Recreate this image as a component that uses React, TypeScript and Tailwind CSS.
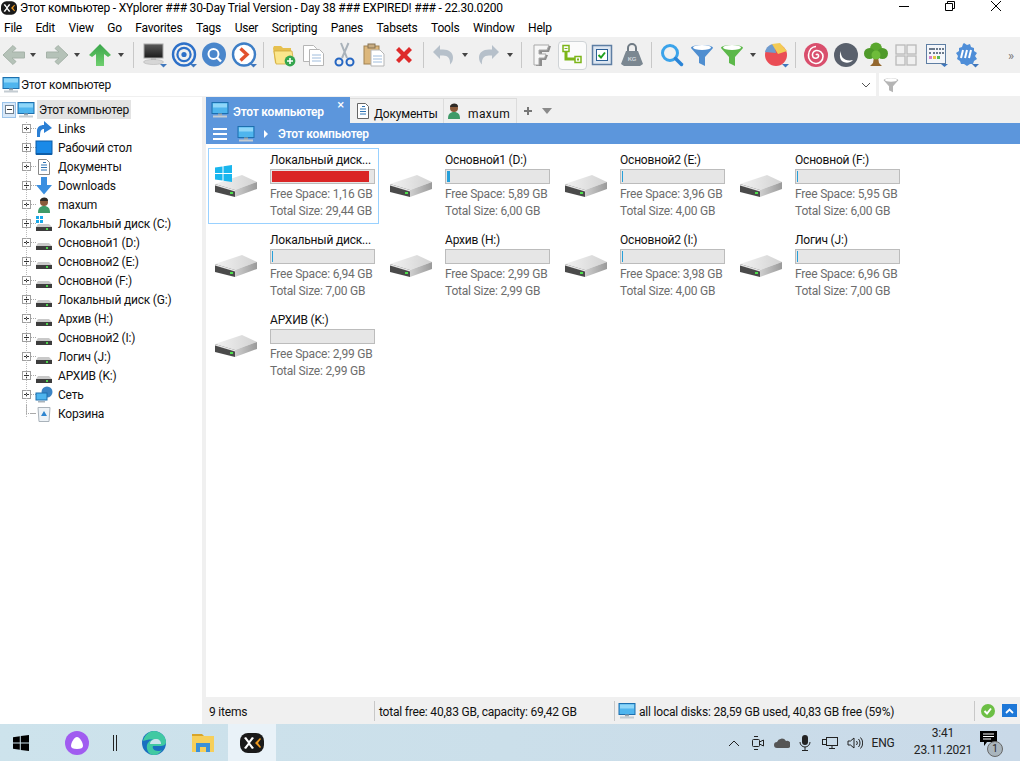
import type { ReactNode } from 'react';

const font = "[font-family:'Roboto','Liberation_Sans',sans-serif] tracking-[-0.2px]";

function Monitor({ size = 18 }: { size?: number }) {
  return (
    <svg width={size} height={size} viewBox="0 0 18 18" className="shrink-0">
      <rect x="1" y="1.5" width="16" height="11" fill="#4fb5ee" stroke="#1d6fae" />
      <rect x="2" y="2.5" width="14" height="4" fill="#8fd6f8" />
      <rect x="7" y="12.5" width="4" height="2" fill="#9aa5ad" />
      <rect x="2" y="14.5" width="14" height="2" fill="#c4ccd2" />
    </svg>
  );
}

function MiniDrive({ win = false }: { win?: boolean }) {
  return (
    <svg width={18} height={18} viewBox="0 0 18 18" className="shrink-0">
      {win && (
        <g fill="#19a8e8">
          <rect x="1" y="1" width="3" height="3" />
          <rect x="5" y="1" width="3" height="3" />
          <rect x="1" y="5" width="3" height="3" />
          <rect x="5" y="5" width="3" height="3" />
        </g>
      )}
      <path d="M3 9h11l3 3H1z" fill="#c9c9c9" />
      <rect x="1" y="12" width="16" height="4" fill="#3d3d3d" />
      <rect x="11" y="13" width="2" height="2" fill="#4ed04e" />
    </svg>
  );
}

function BigDrive({ win = false }: { win?: boolean }) {
  return (
    <svg width={46} height={44} viewBox="0 0 46 44" className="shrink-0">
      <defs>
        <linearGradient id="driveTop" x1="0" y1="0" x2="1" y2="0">
          <stop offset="0" stopColor="#f2f2f2" />
          <stop offset="1" stopColor="#d2d2d2" />
        </linearGradient>
        <linearGradient id="driveSide" x1="0" y1="0" x2="1" y2="0">
          <stop offset="0" stopColor="#cfcfcf" />
          <stop offset="1" stopColor="#9a9a9a" />
        </linearGradient>
      </defs>
      <path d="M2 30l27-9 15 7-22 8z" fill="url(#driveTop)" />
      <path d="M2 30l20 6v7L2 38z" fill="#4a4a4a" />
      <path d="M2 30l20 6v1.500L2 31.500z" fill="#e8e8e8" />
      <path d="M22 36l22-8v7l-22 8z" fill="url(#driveSide)" />
      <rect x="17" y="38" width="3" height="2" fill="#4ee04e" />
      {win && (
        <g fill="#19b6ee">
          <path d="M2 13.500l7.500-1V19H2z" />
          <path d="M10.500 12.300L19 11v8h-8.500z" />
          <path d="M2 20h7.500v6.500l-7.500-1z" />
          <path d="M10.500 20H19v8l-8.500-1.300z" />
        </g>
      )}
    </svg>
  );
}

function Tri({ className = '' }: { className?: string }) {
  return (
    <span className={`w-[10px] h-full flex items-center justify-center shrink-0 ${className}`}>
      <span className="w-0 h-0 border-x-[3.5px] border-x-transparent border-t-[4px] border-t-[#444]" />
    </span>
  );
}

function Sep({ className = '' }: { className?: string }) {
  return <span className={`w-px h-[26px] bg-[#c8c8c8] shrink-0 ${className}`} />;
}

function Slot({ children, className = '' }: { children: ReactNode; className?: string }) {
  return <span className={`w-[30px] h-[30px] flex items-center justify-center shrink-0 ${className}`}>{children}</span>;
}

function Slot28({ children, className = '' }: { children: ReactNode; className?: string }) {
  return <span className={`w-[28px] h-[30px] flex items-center justify-center shrink-0 ${className}`}>{children}</span>;
}

function Caret() {
  return <path d="M20 23h7l-3.500 3.500z" fill="#3f77bd" />;
}

function Toolbar() {
  return (
    <div className="h-[36px] bg-[#f0f0f0] flex items-center">
      <Slot28>
        <svg width="24" height="22" viewBox="0 0 24 22">
          <path d="M1 11L11 1.500 14 4.500 10 8h12.500v6H10l4 3.500-3 3z" fill="#b5c2b8" stroke="#a5b2a8" />
        </svg>
      </Slot28>
      <Tri />
      <Slot28 className="ml-[5px]">
        <svg width="24" height="22" viewBox="0 0 24 22">
          <path d="M23 11L13 1.500 10 4.500 14 8H1.500v6H14l-4 3.500 3 3z" fill="#b5c2b8" stroke="#a5b2a8" />
        </svg>
      </Slot28>
      <Tri className="ml-px" />
      <Slot28 className="ml-[4px]">
        <svg width="24" height="22" viewBox="0 0 24 22">
          <defs>
            <linearGradient id="upArrow" x1="0" y1="0" x2="0" y2="1">
              <stop offset="0" stopColor="#3aa54a" />
              <stop offset="1" stopColor="#6fcf6f" />
            </linearGradient>
          </defs>
          <path d="M12 0l11 11-3 2-4-3v12H8V10l-4 3-3-2z" fill="url(#upArrow)" />
        </svg>
      </Slot28>
      <Tri className="ml-[2px]" />
      <Sep className="ml-[7px]" />
      <Slot className="ml-[5px]">
        <svg width="28" height="28" viewBox="0 0 28 28">
          <defs>
            <linearGradient id="darkScreen" x1="0" y1="0" x2="0" y2="1">
              <stop offset="0" stopColor="#5a5a5a" />
              <stop offset="1" stopColor="#1c1c1c" />
            </linearGradient>
          </defs>
          <rect x="4" y="3" width="19" height="14" fill="url(#darkScreen)" stroke="#a8a8a8" />
          <path d="M11 17h5v2h-5z" fill="#bdbdbd" />
          <ellipse cx="13.500" cy="21" rx="10" ry="2.500" fill="#d6d6d6" stroke="#aaa" strokeWidth=".5" />
          <Caret />
        </svg>
      </Slot>
      <Slot>
        <svg width="28" height="28" viewBox="0 0 28 28">
          <circle cx="14" cy="13.500" r="11" fill="none" stroke="#2d70c8" strokeWidth="2.400" />
          <circle cx="14" cy="13.500" r="6.600" fill="none" stroke="#2d70c8" strokeWidth="2.200" />
          <circle cx="14" cy="13.500" r="2.600" fill="#2d70c8" />
          <Caret />
        </svg>
      </Slot>
      <Slot>
        <svg width="28" height="28" viewBox="0 0 28 28">
          <circle cx="14" cy="13.500" r="12" fill="#4a86cb" />
          <circle cx="13.500" cy="13" r="5" fill="none" stroke="#fff" strokeWidth="2" />
          <path d="M17 16.500l4 4" stroke="#fff" strokeWidth="2.400" />
        </svg>
      </Slot>
      <Slot>
        <svg width="28" height="28" viewBox="0 0 28 28">
          <circle cx="14" cy="13.500" r="11" fill="#fff" stroke="#3e7ec6" strokeWidth="2.400" />
          <path d="M10.500 7.500l6.500 6-6.500 6" fill="none" stroke="#e2512d" strokeWidth="3.400" />
          <Caret />
        </svg>
      </Slot>
      <Sep className="ml-[4px]" />
      <Slot className="ml-[5px]">
        <svg width="24" height="24" viewBox="0 0 24 24">
          <path d="M1 5l1-2h7l2 2h8v15H3z" fill="#e6c04f" />
          <path d="M2 8h18l2 13H4z" fill="#fbe68c" stroke="#d0a93c" strokeWidth=".8" />
          <circle cx="18" cy="18" r="5.400" fill="#35a64f" />
          <path d="M18 15v6M15 18h6" stroke="#fff" strokeWidth="1.600" />
        </svg>
      </Slot>
      <Slot>
        <svg width="24" height="24" viewBox="0 0 24 24" fill="#fff" stroke="#b5b5b5">
          <path d="M1.500 2.500h10l3 3v13h-13z" />
          <path d="M7.500 6.500h10l4 4v12h-14z" />
          <path d="M10 12h9M10 15h9M10 18h9" stroke="#9fbcdc" />
        </svg>
      </Slot>
      <Slot>
        <svg width="22" height="26" viewBox="0 0 22 26" fill="none">
          <path d="M15.500 1L9 16M8 1l6 15" stroke="#a9b2ba" strokeWidth="2" />
          <circle cx="6" cy="20" r="3.500" stroke="#2566c2" strokeWidth="2" />
          <circle cx="17" cy="20" r="3.500" stroke="#2566c2" strokeWidth="2" />
        </svg>
      </Slot>
      <Slot>
        <svg width="24" height="24" viewBox="0 0 24 24">
          <rect x="2" y="3" width="15" height="18" fill="#dcb77c" stroke="#a08150" />
          <rect x="6" y="1" width="7" height="4" fill="#c8ad83" stroke="#857253" />
          <path d="M9 7h9l4 4v12H9z" fill="#fff" stroke="#b5b5b5" />
          <path d="M11 13h9M11 16h9M11 19h9" stroke="#9fbcdc" />
        </svg>
      </Slot>
      <Slot>
        <svg width="20" height="20" viewBox="0 0 20 20">
          <path d="M2 5l3-3 5 5 5-5 3 3-5 5 5 5-3 3-5-5-5 5-3-3 5-5z" fill="#de2b2b" />
        </svg>
      </Slot>
      <Sep className="ml-[4px]" />
      <Slot28 className="ml-[5px]">
        <svg width="24" height="24" viewBox="0 0 24 24" fill="none">
          <path d="M2 9l7-7v4.500h3c6 0 10 3 10 8 0 3-1 5-3 7 .5-6-2-9-7-9H9V16z" fill="#b6c0ca" />
        </svg>
      </Slot28>
      <Tri className="ml-[3px]" />
      <Slot28 className="ml-[5px]">
        <svg width="24" height="24" viewBox="0 0 24 24" fill="none">
          <path d="M22 9l-7-7v4.500h-3c-6 0-10 3-10 8 0 3 1 5 3 7-.5-6 2-9 7-9h3V16z" fill="#b6c0ca" />
        </svg>
      </Slot28>
      <Tri className="ml-[2px]" />
      <Sep className="ml-[6px]" />
      <Slot className="ml-[5px]">
        <svg width="22" height="24" viewBox="0 0 22 24">
          <path d="M5 3h15l-2 6H11v3h6l-2 5h-4v6H5z" fill="#8d8d8d" />
          <path d="M3 2h15l-2 5H8v4h7l-1.500 4H8v7H3z" fill="#f7f7f7" stroke="#a9a9a9" />
        </svg>
      </Slot>
      <Slot>
        <span className="w-[29px] h-[29px] rounded-[4px] border border-[#cfd3d6] bg-[#fbfbfb] flex items-center justify-center">
          <svg width="22" height="22" viewBox="0 0 22 22" fill="none">
            <rect x="2" y="1.500" width="6" height="6" stroke="#7cb518" strokeWidth="1.500" />
            <path d="M3.500 4.500h3" stroke="#7cb518" />
            <path d="M5 8v7h9" stroke="#7cb518" strokeWidth="3" />
            <rect x="14" y="12.500" width="6" height="6" stroke="#7cb518" strokeWidth="1.500" />
            <rect x="16" y="14.500" width="2" height="2" fill="#7cb518" />
          </svg>
        </span>
      </Slot>
      <Slot>
        <svg width="22" height="22" viewBox="0 0 22 22" fill="none">
          <rect x="1.500" y="1.500" width="19" height="19" fill="#dde6f1" stroke="#5e7ea3" strokeWidth="1.500" />
          <rect x="5.500" y="5.500" width="11" height="11" fill="#fff" stroke="#2c5f95" />
          <path d="M7.500 11l2.500 2.500 4-5" stroke="#1ea01e" strokeWidth="2" />
        </svg>
      </Slot>
      <Slot>
        <svg width="24" height="24" viewBox="0 0 24 24">
          <path d="M8 8V5a4 4 0 018 0v3" fill="none" stroke="#6f7a84" strokeWidth="2" />
          <path d="M6 8h12l5 13-3 2H4l-3-2z" fill="#7b8791" />
          <text x="12" y="18" fontSize="6" textAnchor="middle" fill="#cfd6db" fontFamily="Liberation Sans" fontWeight="700">
            KG
          </text>
        </svg>
      </Slot>
      <Sep className="ml-[4px]" />
      <Slot className="ml-[5px]">
        <svg width="24" height="24" viewBox="0 0 24 24" fill="none">
          <circle cx="10" cy="10" r="7.500" stroke="#3ba3ea" strokeWidth="3" />
          <path d="M15.500 15.500l6 6" stroke="#2b84d6" strokeWidth="3.500" strokeLinecap="round" />
        </svg>
      </Slot>
      <Slot>
        <svg width="24" height="24" viewBox="0 0 24 24">
          <path d="M1 5c0-4 22-4 22 0l-8 9v9l-6-3v-6z" fill="#4f8ed0" />
          <ellipse cx="12" cy="4.500" rx="9" ry="2.500" fill="#fff" />
        </svg>
      </Slot>
      <Slot>
        <svg width="24" height="24" viewBox="0 0 24 24">
          <path d="M1 5c0-4 22-4 22 0l-8 9v9l-6-3v-6z" fill="#5cb84a" />
          <ellipse cx="12" cy="4.500" rx="9" ry="2.500" fill="#fff" />
        </svg>
      </Slot>
      <Tri className="ml-px" />
      <Slot className="ml-[3px]">
        <svg width="28" height="28" viewBox="0 0 28 28">
          <circle cx="14" cy="14" r="11" fill="#ea4d55" />
          <path d="M14 12L3 11c1-5 5-8 9-8z" fill="#6f9bce" />
          <path d="M10 3l8-1 7 8-9 3z" fill="#f3cb55" />
          <Caret />
        </svg>
      </Slot>
      <Sep className="ml-[4px]" />
      <Slot className="ml-[5px]">
        <svg width="26" height="26" viewBox="0 0 26 26" fill="none">
          <circle cx="13" cy="13" r="12" fill="#d94f6d" />
          <path
            d="M13 13c1-1.500 3-.5 2.500 1.500-.5 2-4 2.500-5.500.5-1.500-2.500 0-6 3-6.500 3.500-.5 7 2 7 6s-3.500 7.500-7.500 7-7.500-4-7-8.500C6 8 9 4.500 13 4.500"
            stroke="#fff"
            strokeWidth="1.600"
          />
        </svg>
      </Slot>
      <Slot>
        <svg width="26" height="26" viewBox="0 0 26 26">
          <circle cx="13" cy="13" r="12" fill="#59606c" />
          <path d="M8 9c-1 6 4 11 12 9-3 3.500-9 3.500-12 0-1.500-2.500-1.500-6 0-9z" fill="#fff" />
        </svg>
      </Slot>
      <Slot>
        <svg width="26" height="26" viewBox="0 0 26 26">
          <path d="M11 15h4l1 6 3 3H7l3-3z" fill="#94682f" />
          <circle cx="13" cy="6.500" r="6" fill="#5aa72e" />
          <circle cx="6.500" cy="11.500" r="5.500" fill="#4f9a2a" />
          <circle cx="19.500" cy="11.500" r="5.500" fill="#4f9a2a" />
          <circle cx="13" cy="13" r="4.500" fill="#6ebc3a" />
        </svg>
      </Slot>
      <Slot>
        <svg width="24" height="24" viewBox="0 0 24 24" fill="none" stroke="#b9b9b9" strokeWidth="1.300">
          <rect x="2" y="2" width="9" height="9" />
          <rect x="13" y="2" width="9" height="9" />
          <rect x="2" y="13" width="9" height="9" />
          <rect x="13" y="13" width="9" height="9" />
        </svg>
      </Slot>
      <Slot>
        <svg width="28" height="26" viewBox="0 0 28 26">
          <rect x="4.500" y="2.500" width="19" height="19" fill="#f4f6fa" stroke="#5e7ea3" />
          <path d="M7 6h6v2H7zM14 6h2v2h-2zM17 6h2v2h-2zM20 6h2v2h-2zM7 10h2v2H7zM11 10h2v2h-2zM14 10h2v2h-2zM17 10h2v2h-2zM20 10h2v2h-2z" fill="#6b7a8c" />
          <rect x="7" y="14" width="3" height="3" fill="#d77ec8" />
          <rect x="11" y="14" width="3" height="3" fill="#e8c442" />
          <rect x="15" y="14" width="3" height="3" fill="#58b858" />
          <path d="M19 22h7l-3.500 3z" fill="#3f77bd" />
        </svg>
      </Slot>
      <Slot>
        <svg width="28" height="28" viewBox="0 0 28 28">
          <path d="M12 2l3 2 3-1 1 3 3 1v3l3 2-2 3 2 3-3 2-1 3-3 0-3 2-3-2-3 0-1-3-3-2 1-3-2-3 3-2 0-3 3-1 1-3z" fill="#4f8ed8" />
          <path d="M9 17l2-8M13 17l2-8M17 17l2-8" stroke="#fff" strokeWidth="2" />
          <Caret />
        </svg>
      </Slot>
      <span className="ml-auto mr-[2px] w-[10px] text-[#777] text-[13px] leading-none">»</span>
    </div>
  );
}

const treeItems: { label: string; icon: ReactNode }[] = [
  {
    label: 'Links',
    icon: (
      <svg width="18" height="18" viewBox="0 0 18 18">
        <path d="M2 17V11c0-4 3-6 7-6V1l8 7-8 5V9c-3 0-4 2-4 8z" fill="#2a7fd5" />
      </svg>
    ),
  },
  {
    label: 'Рабочий стол',
    icon: (
      <svg width="18" height="18" viewBox="0 0 18 18">
        <rect x="1" y="2" width="16" height="13" fill="#1a8ae8" stroke="#0d5da8" />
        <rect x="1" y="14" width="16" height="2" fill="#0d5da8" />
      </svg>
    ),
  },
  {
    label: 'Документы',
    icon: (
      <svg width="18" height="18" viewBox="0 0 18 18">
        <path d="M3.500 1.500h8l3 3v12h-11z" fill="#fff" stroke="#888" />
        <path d="M6 7h6M6 9.500h6M6 12h6M8 4.500h3" stroke="#2f74b5" />
      </svg>
    ),
  },
  {
    label: 'Downloads',
    icon: (
      <svg width="18" height="18" viewBox="0 0 18 18">
        <path d="M6 0h6v8h5l-8 9.500L1 8h5z" fill="#3b8fe0" />
      </svg>
    ),
  },
  {
    label: 'maxum',
    icon: (
      <svg width="18" height="18" viewBox="0 0 18 18">
        <path d="M3 17c0-5 2-7 6-7s6 2 6 7z" fill="#3f9a68" />
        <circle cx="9" cy="6" r="4" fill="#8a5a3a" />
        <path d="M5 5c0-4 8-5 8 0z" fill="#2e2a26" />
      </svg>
    ),
  },
  { label: 'Локальный диск (C:)', icon: <MiniDrive win /> },
  { label: 'Основной1 (D:)', icon: <MiniDrive /> },
  { label: 'Основной2 (E:)', icon: <MiniDrive /> },
  { label: 'Основной (F:)', icon: <MiniDrive /> },
  { label: 'Локальный диск (G:)', icon: <MiniDrive /> },
  { label: 'Архив (H:)', icon: <MiniDrive /> },
  { label: 'Основной2 (I:)', icon: <MiniDrive /> },
  { label: 'Логич (J:)', icon: <MiniDrive /> },
  { label: 'АРХИВ (K:)', icon: <MiniDrive /> },
  {
    label: 'Сеть',
    icon: (
      <svg width="18" height="18" viewBox="0 0 18 18">
        <circle cx="12" cy="6" r="5.500" fill="#3b84c4" />
        <rect x="1" y="7" width="11" height="7" fill="#4fb5ee" stroke="#1d6fae" />
        <rect x="3" y="15" width="7" height="1.500" fill="#aab4bb" />
      </svg>
    ),
  },
  {
    label: 'Корзина',
    icon: (
      <svg width="18" height="18" viewBox="0 0 18 18">
        <path d="M3 2.500h12l-1 14H4z" fill="#eef3f7" stroke="#a9b2ba" />
        <path d="M9 6l3 5H6z" fill="#2f86d0" />
      </svg>
    ),
  },
];

function Plus({ minus = false, big = false }: { minus?: boolean; big?: boolean }) {
  return (
    <span
      className={`w-[9px] h-[9px] border bg-white flex items-center justify-center shrink-0 relative ${big ? 'border-[#6f7f8f]' : 'border-[#a0a0a0]'}`}
    >
      <span className="absolute w-[5px] h-px bg-[#333]" />
      {!minus && <span className="absolute w-px h-[5px] bg-[#333]" />}
    </span>
  );
}

function Tree() {
  return (
    <div className="w-[202px] shrink-0 bg-white pt-[3px] text-[12px] text-[#111] relative">
      <div className="h-[19px] flex items-center">
        <span className="ml-[2px] w-[14px] h-[16px] bg-[#d8e8f8] border border-[#9cc4ea] flex items-center justify-center">
          <Plus minus big />
        </span>
        <span className="ml-px">
          <Monitor />
        </span>
        <span className="ml-[2px] px-[2px] h-[19px] leading-[20px] bg-[#e3e3e3]">Этот компьютер</span>
      </div>
      {treeItems.map((item, i) => (
        <div key={item.label} className="h-[19px] flex items-center pl-[22px]">
          {i < treeItems.length - 1 ? (
            <Plus />
          ) : (
            <span className="w-[9px] h-[9px] shrink-0 ml-[4px] -mt-[9px] border-l border-b border-dotted border-[#aaa]" />
          )}
          <span
            className={`h-px border-t border-dotted border-[#aaa] w-[5px] shrink-0 ${i < treeItems.length - 1 ? '' : '-ml-[4px]'}`}
          />
          <span className="w-[18px] h-[18px] shrink-0 -ml-px">{item.icon}</span>
          <span className="ml-[5px] whitespace-nowrap">{item.label}</span>
        </div>
      ))}
      <span className="absolute left-[26px] top-[25px] h-[295px] border-l border-dotted border-[#bbb] pointer-events-none" />
    </div>
  );
}

type Drive = { name: string; free: string; total: string; used: number; win?: boolean; selected?: boolean };

const drives: Drive[] = [
  { name: 'Локальный диск...', free: '1,16', total: '29,44', used: 96, win: true, selected: true },
  { name: 'Основной1 (D:)', free: '5,89', total: '6,00', used: 3 },
  { name: 'Основной2 (E:)', free: '3,96', total: '4,00', used: 1 },
  { name: 'Основной (F:)', free: '5,95', total: '6,00', used: 1 },
  { name: 'Локальный диск...', free: '6,94', total: '7,00', used: 1 },
  { name: 'Архив (H:)', free: '2,99', total: '2,99', used: 0 },
  { name: 'Основной2 (I:)', free: '3,98', total: '4,00', used: 1 },
  { name: 'Логич (J:)', free: '6,96', total: '7,00', used: 1 },
  { name: 'АРХИВ (K:)', free: '2,99', total: '2,99', used: 0 },
];

function Tile({ d }: { d: Drive }) {
  return (
    <div
      className={`w-[171px] h-[76px] mr-[4px] mb-[4px] flex border ${d.selected ? 'border-[#99d1ff]' : 'border-transparent'}`}
    >
      <div className="w-[61px] shrink-0 pl-[4px] pt-[5px]">
        <BigDrive win={d.win} />
      </div>
      <div className="text-[12px] leading-[17px] text-[#6d6d6d] pt-[3px]">
        <div className="text-[#111] whitespace-nowrap leading-[16px]">{d.name}</div>
        <div className="w-[105px] h-[15px] border border-[#bcbcbc] bg-[#e6e6e6] p-px mt-[1px] mb-[2px]">
          <div className={`h-full ${d.selected ? 'bg-[#da2626]' : 'bg-[#26a0da]'}`} style={{ width: `${d.used}%` }} />
        </div>
        <div className="whitespace-nowrap">Free Space: {d.free} GB</div>
        <div className="whitespace-nowrap">Total Size: {d.total} GB</div>
      </div>
    </div>
  );
}

function Tabs() {
  return (
    <div className="h-[26px] bg-[#f0f0f0] flex items-end text-[12px] text-[#111]">
      <div className="w-[144px] h-[26px] bg-[#5c96dc] text-white font-semibold flex items-center pl-[5px] relative">
        <Monitor />
        <span className="ml-[4px] mt-[4px]">Этот компьютер</span>
        <span className="absolute right-[6px] top-[1px] text-[13px] leading-[14px] font-normal">×</span>
      </div>
      <div className="w-[94px] h-[25px] border-t border-r border-[#dcdcdc] flex items-center pl-[4px]">
        <svg width="18" height="18" viewBox="0 0 18 18">
          <path d="M3.500 1.500h8l3 3v12h-11z" fill="#fff" stroke="#666" />
          <path d="M6 7h6M6 9.500h6M6 12h6M8 4.500h3" stroke="#2f74b5" />
        </svg>
        <span className="ml-[2px] mt-[5px]">Документы</span>
      </div>
      <div className="w-[73px] h-[25px] border-t border-r border-[#dcdcdc] flex items-center pl-[1px]">
        <svg width="18" height="18" viewBox="0 0 18 18">
          <path d="M3 17c0-5 2-7 6-7s6 2 6 7z" fill="#3f9a68" />
          <circle cx="9" cy="6" r="4" fill="#8a5a3a" />
          <path d="M5 5c0-4 8-5 8 0z" fill="#2e2a26" />
        </svg>
        <span className="ml-[5px] mt-[5px] tracking-[0.4px]">maxum</span>
      </div>
      <svg width="12" height="12" viewBox="0 0 12 12" className="ml-[5px] mb-[6px]">
        <path d="M6 2v8M2 6h8" stroke="#777" strokeWidth="2" />
      </svg>
      <span className="ml-[8px] mb-[9px] w-0 h-0 border-x-[5px] border-x-transparent border-t-[6px] border-t-[#8a8a8a]" />
    </div>
  );
}

function Breadcrumb() {
  return (
    <div className="h-[21px] bg-[#5c96dc] flex items-center text-[12px] font-semibold text-white">
      <span className="ml-[7px] w-[14px] flex flex-col gap-[3px]">
        <span className="h-[2px] bg-white" />
        <span className="h-[2px] bg-white" />
        <span className="h-[2px] bg-white" />
      </span>
      <span className="ml-[10px]">
        <Monitor />
      </span>
      <span className="ml-[9px] w-0 h-0 border-y-[4px] border-y-transparent border-l-[4px] border-l-white" />
      <span className="ml-[10px]">Этот компьютер</span>
    </div>
  );
}

function StatusBar() {
  return (
    <div className="h-[27px] bg-[#f0f0f0] flex items-center text-[12px] text-[#111]">
      <span className="w-[168px] pl-[3px] pt-[2px] shrink-0">9 items</span>
      <span className="w-px h-[20px] bg-[#c8c8c8] shrink-0" />
      <span className="w-[239px] pl-[4px] pt-[2px] shrink-0">total free: 40,83 GB, capacity: 69,42 GB</span>
      <span className="w-px h-[20px] bg-[#c8c8c8] shrink-0" />
      <span className="ml-[3px]">
        <Monitor />
      </span>
      <span className="ml-[3px] pt-[2px] whitespace-nowrap">all local disks: 28,59 GB used, 40,83 GB free (59%)</span>
      <span className="ml-auto w-px h-[20px] bg-[#c8c8c8] shrink-0" />
      <svg width="16" height="16" viewBox="0 0 16 16" className="ml-[5px]">
        <circle cx="8" cy="8" r="7" fill="#6cbf45" />
        <path d="M4.500 8l2.500 2.500 4-5" fill="none" stroke="#fff" strokeWidth="2" />
      </svg>
      <span className="ml-[6px] mr-[3px] w-[15px] h-[13px] bg-[#1e78d8] flex items-center justify-center">
        <svg width="9" height="6" viewBox="0 0 9 6">
          <path d="M1 5l3.500-3.500L8 5" fill="none" stroke="#fff" strokeWidth="1.800" />
        </svg>
      </span>
    </div>
  );
}

function XyLogo({ w, h }: { w: number; h: number }) {
  return (
    <svg width={w} height={h} viewBox="0 0 24 20">
      <rect width="24" height="20" rx="8" fill="#1a1a1a" />
      <path d="M4 5l2-1 3 4 3-4 2 1-4 5 4 5-2 1-3-4-3 4-2-1 4-5z" fill="#fff" />
      <path d="M15 10l5-5 1 1-3 4 3 4-1 1z" fill="#f19a1f" />
    </svg>
  );
}

function Taskbar() {
  return (
    <div className="h-[37px] bg-gradient-to-r from-[#cde3ec] via-[#cbdfea] to-[#c9d9e8] flex items-center text-[12px] text-[#222]">
      <svg width="16" height="16" viewBox="0 0 16 16" className="ml-[13px]" fill="#000">
        <path d="M0 2.200L6.800 1.200V7.500H0zM7.800 1L16 0v7.500H7.800zM0 8.500h6.800v6.300L0 13.800zM7.800 8.500H16V16l-8.200-1.100z" />
      </svg>
      <svg width="24" height="24" viewBox="0 0 24 24" className="ml-[36px]">
        <circle cx="12" cy="12" r="12" fill="#a05cf0" />
        <path d="M12 6c3 0 6 6 6 9 0 2-2 3-6 3s-6-1-6-3c0-3 3-9 6-9z" fill="#fff" />
      </svg>
      <span className="ml-[24px] w-[4px] h-[16px] border-x border-[#222]" />
      <svg width="24" height="24" viewBox="0 0 24 24" className="ml-[25px]">
        <circle cx="12" cy="12" r="12" fill="#1a6fc0" />
        <path d="M1 10C3 3 8 0 12 0c6 0 12 5 12 11 0 3-3 4-6 4H11c-1 2 1 5 5 5 2 0 3-.5 4-1-2 3-5 5-8 5-5 0-8-5-7-10 1-3 4-6 8-5-4-1-9 0-12 1z" fill="#41c9a2" />
        <path d="M8 13c0-3 3-5 6-5 3 0 5 2 5 5H8z" fill="#cde3ec" />
      </svg>
      <svg width="22" height="20" viewBox="0 0 22 20" className="ml-[26px]">
        <path d="M0 1h10l2 2H0z" fill="#d8a52a" />
        <rect y="3" width="22" height="16" fill="#f6cf5a" />
        <rect x="4" y="10" width="14" height="9" fill="#3a90d8" />
        <rect x="8" y="14" width="6" height="5" fill="#f6cf5a" />
      </svg>
      <div className="ml-[14px] w-[48px] h-full bg-[#e9f2f8] flex items-center justify-center">
        <XyLogo w={24} h={20} />
      </div>
      <div className="ml-auto flex items-center">
        <svg width="12" height="8" viewBox="0 0 12 8" fill="none" stroke="#222">
          <path d="M1 7l5-5 5 5" />
        </svg>
        <svg width="14" height="16" viewBox="0 0 14 16" fill="none" stroke="#222" className="ml-[11px]">
          <rect x="1.500" y="4.500" width="7" height="7" rx="1" />
          <path d="M8.500 7l4-2v6l-4-2M3 1.500h4M3 14.500h4" />
        </svg>
        <svg width="16" height="12" viewBox="0 0 16 12" className="ml-[9px]">
          <path d="M3 11a3 3 0 010-6 5 5 0 019-1 3.500 3.500 0 012 7z" fill="#555" />
        </svg>
        <svg width="12" height="18" viewBox="0 0 12 18" className="ml-[9px]">
          <rect x="3" y="1" width="6" height="10" rx="3" fill="#222" />
          <path d="M1 8a5 5 0 0010 0M6 13v3M3 16.500h6" fill="none" stroke="#222" />
        </svg>
        <svg width="16" height="14" viewBox="0 0 16 14" fill="none" stroke="#222" className="ml-[11px]">
          <rect x="4.500" y="1.500" width="11" height="8" />
          <rect x=".5" y="3.500" width="4" height="5" fill="#cbdfea" />
          <path d="M10 9.500v3M7 12.500h6" />
        </svg>
        <svg width="16" height="14" viewBox="0 0 16 14" fill="none" stroke="#222" className="ml-[9px]">
          <path d="M1 5h2.500L7 2v10L3.500 9H1zM9.500 5a3 3 0 010 4M11.500 3a6 6 0 010 8M13.500 1.500a8 8 0 010 11" />
        </svg>
        <span className="ml-[7px] w-[26px] text-center">ENG</span>
        <span className="ml-[13px] w-[68px] text-center leading-[17px] pb-[1px]">
          3:41
          <br />
          23.11.2021
        </span>
        <span className="ml-[3px] mr-[18px] w-[22px] h-[26px] relative">
          <svg width="17" height="16" viewBox="0 0 17 16" className="absolute left-0 top-[1px]">
            <path d="M0 0h17v11H7l-3 4v-4H0z" fill="#000" />
            <path d="M3 3h11M3 5.500h11M3 8h8" stroke="#fff" />
          </svg>
          <span className="absolute right-[-1px] bottom-[-1px] w-[16px] h-[16px] rounded-full bg-[#a9b5bd] border border-[#666] text-[10px] leading-[14px] text-center">
            1
          </span>
        </span>
      </div>
    </div>
  );
}

export default function App() {
  return (
    <div className={`w-[1020px] h-[761px] overflow-hidden flex flex-col bg-white ${font}`}>
      <div className="h-[18px] flex items-center text-[12px] text-black">
        <span className="ml-[1px] mb-[3px] shrink-0 flex">
          <XyLogo w={16} h={14} />
        </span>
        <span className="ml-[3px] mb-[2px] whitespace-nowrap">Этот компьютер - XYplorer ### 30-Day Trial Version - Day 38 ### EXPIRED! ### - 22.30.0200</span>
        <div className="ml-auto flex items-center mb-[6px]">
          <span className="w-[10px] h-px bg-black mr-[36px]" />
          <svg width="10" height="10" viewBox="0 0 10 10" fill="none" stroke="#000" className="mr-[36px]">
            <path d="M.5 2.500h7v7h-7zM2.500 2.500v-2h7v7h-2" />
          </svg>
          <svg width="10" height="10" viewBox="0 0 10 10" stroke="#000" className="mr-[19px]">
            <path d="M0 0l10 10M10 0L0 10" />
          </svg>
        </div>
      </div>
      <div className="h-[19px] pt-px flex items-center text-[12px] text-black gap-[13.5px] pl-[4px]">
        {['File', 'Edit', 'View', 'Go', 'Favorites', 'Tags', 'User', 'Scripting', 'Panes', 'Tabsets', 'Tools', 'Window', 'Help'].map((m) => (
          <span key={m}>{m}</span>
        ))}
      </div>
      <Toolbar />
      <div className="h-[23px] flex items-center text-[12px] text-[#111] bg-white">
        <span className="ml-[2px]">
          <Monitor />
        </span>
        <span className="ml-px">Этот компьютер</span>
        <svg width="10" height="6" viewBox="0 0 10 6" fill="none" stroke="#555" className="ml-auto">
          <path d="M1 1l4 4 4-4" />
        </svg>
        <span className="ml-[5px] w-[3px] h-full bg-[#f0f0f0]" />
        <span className="w-[141px] pl-[4px] flex items-center">
          <svg width="16" height="16" viewBox="0 0 24 24">
            <path d="M1 5c0-4 22-4 22 0l-8 9v9l-6-3v-6z" fill="#b5b5b5" />
            <ellipse cx="12" cy="4.500" rx="9" ry="2.500" fill="#fff" />
          </svg>
        </span>
      </div>
      <div className="h-px bg-[#f0f0f0]" />
      <div className="flex-1 flex min-h-0 flex-col">
        <div className="flex-1 flex min-h-0">
          <Tree />
          <div className="w-[4px] bg-[#f0f0f0] shrink-0" />
          <div className="flex-1 flex flex-col min-w-0">
            <Tabs />
            <Breadcrumb />
            <div className="flex-1 bg-white pl-[2px] pt-[4px] flex flex-wrap content-start">
              {drives.map((d, i) => (
                <Tile key={i} d={d} />
              ))}
            </div>
            <StatusBar />
          </div>
        </div>
        <Taskbar />
      </div>
    </div>
  );
}
